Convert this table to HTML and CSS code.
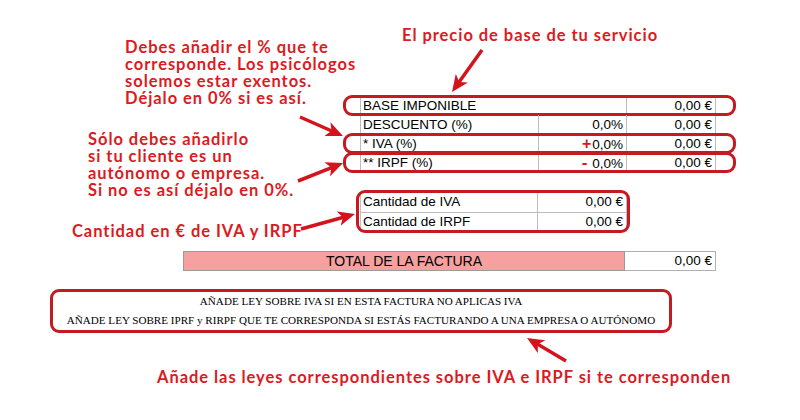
FILE: index.html
```html
<!DOCTYPE html>
<html lang="es">
<head>
<meta charset="utf-8">
<title>Factura</title>
<link rel="stylesheet" href="styles.css">
</head>
<body>
<div class="page">
  <div class="sheet">
    <div class="calc">
      <div class="row hl"><span class="c1 span2">BASE IMPONIBLE</span><span class="c3">0,00 €</span></div>
      <div class="row"><span class="c1">DESCUENTO (%)</span><span class="c2">0,0%</span><span class="c3">0,00 €</span></div>
      <div class="row hl"><span class="c1">* IVA (%)</span><span class="c2"><b class="sign">+</b>0,0%</span><span class="c3">0,00 €</span></div>
      <div class="row hl"><span class="c1">** IRPF (%)</span><span class="c2"><b class="sign minus">-</b> 0,0%</span><span class="c3">0,00 €</span></div>
    </div>
    <div class="amounts">
      <div class="arow"><span class="c1">Cantidad de IVA</span><span class="c2">0,00 €</span></div>
      <div class="arow"><span class="c1">Cantidad de IRPF</span><span class="c2">0,00 €</span></div>
    </div>
    <div class="total"><span class="tlabel">TOTAL DE LA FACTURA</span><span class="tval">0,00 €</span></div>
    <div class="laws">
      <p>AÑADE LEY SOBRE IVA SI EN ESTA FACTURA NO APLICAS IVA</p>
      <p>AÑADE LEY SOBRE IPRF y RIRPF QUE TE CORRESPONDA SI ESTÁS FACTURANDO A UNA EMPRESA O AUTÓNOMO</p>
    </div>
  </div>

  <p class="note note-base">El precio de base de tu servicio</p>
  <div class="note note-iva">
    <p>Debes añadir el % que te</p>
    <p>corresponde. Los psicólogos</p>
    <p>solemos estar exentos.</p>
    <p>Déjalo en 0% si es así.</p>
  </div>
  <div class="note note-irpf">
    <p>Sólo debes añadirlo</p>
    <p>si tu cliente es un</p>
    <p>autónomo o empresa.</p>
    <p>Si no es así déjalo en 0%.</p>
  </div>
  <p class="note note-amount">Cantidad en € de IVA y IRPF</p>
  <p class="note note-laws">Añade las leyes correspondientes sobre IVA e IRPF si te corresponden</p>

  <svg class="arrows" viewBox="0 0 800 420" width="800" height="420" aria-hidden="true">
    <defs>
      <marker id="ah" markerUnits="userSpaceOnUse" markerWidth="17" markerHeight="15" refX="6" refY="7.5" orient="auto">
        <path d="M0,0 L17,7.5 L0,15 L4.5,7.5 Z" fill="#d4141c"/>
      </marker>
    </defs>
    <g stroke="#d4141c" stroke-width="3.5" fill="none" marker-end="url(#ah)">
      <line x1="482" y1="50" x2="458.4" y2="83.1"/>
      <line x1="300" y1="117" x2="332.9" y2="131.5"/>
      <line x1="298" y1="181" x2="332.8" y2="167.1"/>
      <line x1="301" y1="229" x2="344.4" y2="217"/>
      <line x1="566" y1="361" x2="536.5" y2="343.6"/>
    </g>
  </svg>
</div>
</body>
</html>
```
FILE: styles.css
```css
* { box-sizing: border-box; }

html, body {
  margin: 0;
  padding: 0;
  background: #ffffff;
}

.page {
  position: relative;
  width: 800px;
  height: 420px;
  overflow: hidden;
  font-family: "Liberation Sans", Arial, sans-serif;
  color: #000;
}

.sheet {
  padding-top: 96px;
}

/* main calculation table */
.calc {
  margin-left: 360px;
  width: 356px;
  border-left: 1px solid #bdbdbd;
  border-right: 1px solid #bdbdbd;
}

.row {
  position: relative;
  display: grid;
  grid-template-columns: 177px 88px 89px;
  height: 19px;
  line-height: 19px;
  font-size: 13.5px;
}

.row.hl::after {
  content: "";
  position: absolute;
  left: -18px;
  right: -21px;
  top: -1px;
  bottom: -1px;
  border: 3px solid #c41a22;
  border-radius: 9px;
}

.c1 {
  padding-left: 2px;
  white-space: nowrap;
}

.span2 {
  grid-column: span 2;
}

.c2, .c3 {
  border-left: 1px solid #bdbdbd;
  text-align: right;
  padding-right: 3px;
  white-space: nowrap;
}

.sign {
  color: #e0161e;
  font-weight: 700;
  font-size: 16px;
  margin-right: 1px;
}

.sign.minus {
  font-size: 17px;
}

/* amounts table */
.amounts {
  position: relative;
  margin-top: 20px;
  margin-left: 360px;
  width: 267px;
  border-left: 1px solid #bdbdbd;
  border-right: 1px solid #bdbdbd;
}

.amounts::after {
  content: "";
  position: absolute;
  left: -5px;
  right: -4px;
  top: -2px;
  bottom: -1px;
  border: 3px solid #c41a22;
  border-radius: 9px;
}

.arow {
  display: grid;
  grid-template-columns: 176px 89px;
  height: 20px;
  line-height: 20px;
  font-size: 13.5px;
}

.arow + .arow {
  border-top: 1px solid #bdbdbd;
  line-height: 18px;
}

/* total */
.total {
  display: grid;
  grid-template-columns: 442px 91px;
  margin-top: 19px;
  margin-left: 183px;
  width: 533px;
  height: 20px;
  font-size: 14px;
  line-height: 18px;
}

.tlabel {
  background: #f6a0a0;
  border: 1px solid #9a9a9a;
  text-align: center;
}

.tval {
  border: 1px solid #b0b0b0;
  border-left: none;
  text-align: right;
  padding-right: 3px;
  font-size: 13.5px;
}

/* laws box */
.laws {
  margin-top: 18px;
  margin-left: 50px;
  width: 622px;
  height: 44px;
  border: 3px solid #c41a22;
  border-radius: 9px;
  display: flex;
  flex-direction: column;
  justify-content: center;
  align-items: center;
  font-family: "Liberation Serif", "Times New Roman", serif;
  font-size: 11.1px;
}

.laws p {
  margin: 0;
  line-height: 19px;
  white-space: nowrap;
}

/* annotations */
.note {
  position: absolute;
  margin: 0;
  font-family: Lato, "Noto Sans", sans-serif;
  font-weight: 700;
  font-size: 16.5px;
  line-height: 17px;
  letter-spacing: 0.95px;
  color: #dc1a22;
  white-space: nowrap;
}

.note p {
  margin: 0;
  height: 17px;
}

.note-base { left: 402px; top: 27px; }
.note-iva { left: 125px; top: 39px; }
.note-irpf { left: 88px; top: 131px; }
.note-amount { left: 72px; top: 223px; }
.note-laws { left: 157px; top: 369px; }

.arrows {
  position: absolute;
  left: 0;
  top: 0;
  pointer-events: none;
}
```
